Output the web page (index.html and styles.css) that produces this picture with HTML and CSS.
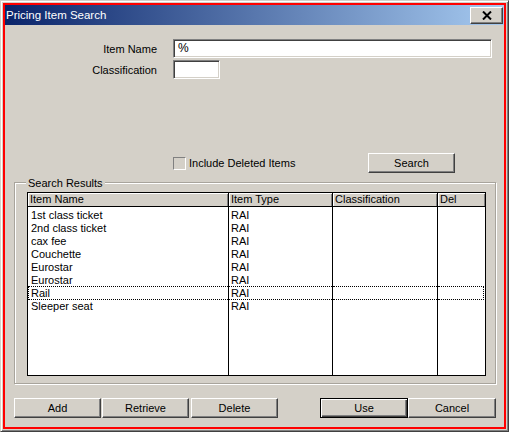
FILE: index.html
```html
<!DOCTYPE html>
<html>
<head>
<meta charset="utf-8">
<link rel="stylesheet" href="styles.css">
</head>
<body>
<div class="frame">
  <div class="win">
    <div class="titlebar">
      <span class="title">Pricing Item Search</span>
      <button class="close"><svg width="10" height="9" viewBox="0 0 10 9"><path d="M1 0.5 L9 8.5 M9 0.5 L1 8.5" stroke="#000" stroke-width="2" fill="none"/></svg></button>
    </div>
    <div class="content">
      <div class="form-row r1"><span class="lbl">Item Name</span><div class="input wide">%</div></div>
      <div class="form-row r2"><span class="lbl">Classification</span><div class="input narrow"></div></div>
      <div class="check-row">
        <div class="check-wrap"><span class="checkbox"></span><span>Include Deleted Items</span></div>
        <button class="btn">Search</button>
      </div>
      <div class="group">
        <span class="group-title">Search Results</span>
        <div class="list">
          <div class="col c1">
            <div class="hdr">Item Name</div>
            <div class="cells">
              <div class="cell">1st class ticket</div>
              <div class="cell">2nd class ticket</div>
              <div class="cell">cax fee</div>
              <div class="cell">Couchette</div>
              <div class="cell">Eurostar</div>
              <div class="cell">Eurostar</div>
              <div class="cell focus first">Rail</div>
              <div class="cell">Sleeper seat</div>
            </div>
          </div>
          <div class="col c2">
            <div class="hdr">Item Type</div>
            <div class="cells">
              <div class="cell">RAI</div>
              <div class="cell">RAI</div>
              <div class="cell">RAI</div>
              <div class="cell">RAI</div>
              <div class="cell">RAI</div>
              <div class="cell">RAI</div>
              <div class="cell focus">RAI</div>
              <div class="cell">RAI</div>
            </div>
          </div>
          <div class="col c3">
            <div class="hdr">Classification</div>
            <div class="cells">
              <div class="cell"></div>
              <div class="cell"></div>
              <div class="cell"></div>
              <div class="cell"></div>
              <div class="cell"></div>
              <div class="cell"></div>
              <div class="cell focus"></div>
              <div class="cell"></div>
            </div>
          </div>
          <div class="col c4">
            <div class="hdr">Del</div>
            <div class="cells">
              <div class="cell"></div>
              <div class="cell"></div>
              <div class="cell"></div>
              <div class="cell"></div>
              <div class="cell"></div>
              <div class="cell"></div>
              <div class="cell focus last"></div>
              <div class="cell"></div>
            </div>
          </div>
        </div>
      </div>
      <div class="btn-row">
        <button class="btn">Add</button>
        <button class="btn g1">Retrieve</button>
        <button class="btn g2">Delete</button>
        <button class="btn default g3">Use</button>
        <button class="btn wide-btn">Cancel</button>
      </div>
    </div>
  </div>
</div>
</body>
</html>
```
FILE: styles.css
```css
body {
  margin: 0;
  background: #d4d0c8;
  font-family: "Liberation Sans", Arial, sans-serif;
  font-size: 11px;
  color: #000;
}
.frame {
  width: 509px;
  height: 432px;
  box-sizing: border-box;
  border: 1px solid;
  border-color: #d4d0c8 #404040 #404040 #d4d0c8;
  box-shadow: inset 1px 1px 0 #fff, inset -1px -1px 0 #808080;
  padding: 2px;
  background: #d4d0c8;
}
.win {
  height: 100%;
  box-sizing: border-box;
  border: 2px solid #ff0000;
}
.titlebar {
  height: 20px;
  display: flex;
  align-items: center;
  justify-content: space-between;
  background: linear-gradient(to right, #0a246a, #a6caf0);
  padding-left: 1px;
}
.title {
  color: #fff;
  font-size: 11.5px;
}
.close {
  width: 33px;
  height: 17px;
  margin-right: 1px;
  padding: 0;
  display: flex;
  align-items: center;
  justify-content: center;
  box-sizing: border-box;
  background: #d4d0c8;
  border: 1px solid;
  border-color: #fff #404040 #404040 #fff;
  box-shadow: inset -1px -1px 0 #808080;
}
.form-row {
  display: flex;
  align-items: center;
  gap: 16px;
}
.r1 { margin-top: 14px; }
.r2 { margin-top: 2px; }
.lbl {
  width: 152px;
  text-align: right;
}
.input {
  height: 19px;
  box-sizing: border-box;
  background: #fff;
  border: 1px solid;
  border-color: #808080 #fff #fff #808080;
  box-shadow: inset 1px 1px 0 #404040, inset -1px -1px 0 #d4d0c8;
  padding-left: 4px;
  line-height: 17px;
  font-size: 12px;
}
.wide { width: 319px; }
.narrow { width: 47px; }
.check-row {
  margin-top: 74px;
  height: 20px;
  display: flex;
  align-items: center;
  padding-left: 168px;
}
.check-wrap {
  width: 195px;
  display: flex;
  align-items: center;
  gap: 3px;
}
.checkbox {
  width: 13px;
  height: 13px;
  box-sizing: border-box;
  border: 1px solid;
  border-color: #808080 #fff #fff #808080;
  background: #d4d0c8;
}
.btn {
  width: 87px;
  height: 20px;
  box-sizing: border-box;
  padding: 0;
  background: #d4d0c8;
  border: 1px solid;
  border-color: #fff #404040 #404040 #fff;
  box-shadow: inset -1px -1px 0 #808080;
  font-family: "Liberation Sans", Arial, sans-serif;
  font-size: 11px;
  color: #000;
}
.group {
  position: relative;
  margin: 9px 0 0 9px;
  width: 482px;
  height: 202px;
  box-sizing: border-box;
  border: 1px solid #a8a49c;
  box-shadow: inset 1px 1px 0 #fff, 1px 1px 0 #fff;
  padding: 9px 0 0 12px;
}
.group-title {
  position: absolute;
  left: 11px;
  top: -6px;
  padding: 0 2px;
  line-height: 13px;
  background: #d4d0c8;
}
.list {
  width: 459px;
  height: 184px;
  box-sizing: border-box;
  border: 1px solid #000;
  background: #fff;
  display: flex;
  font-size: 11px;
}
.col {
  box-sizing: border-box;
  border-right: 1px solid #000;
}
.c1 { width: 201px; }
.c2 { width: 104px; }
.c3 { width: 105px; }
.c4 { flex: 1; border-right: none; }
.hdr {
  height: 14px;
  box-sizing: border-box;
  border-bottom: 1px solid #000;
  background: #d4d0c8;
  box-shadow: inset 1px 1px 0 #fff, inset -1px 0 0 #808080;
  padding-left: 2px;
  line-height: 13px;
  white-space: nowrap;
}
.cells { padding-top: 2px; }
.cell {
  height: 13px;
  line-height: 13px;
  padding-left: 2px;
  white-space: nowrap;
  position: relative;
}
.c1 .cell { padding-left: 3px; }
.focus::before {
  content: "";
  position: absolute;
  left: 0;
  right: 0;
  top: -1px;
  bottom: 0;
  border-top: 1px dotted #000;
  border-bottom: 1px dotted #000;
}
.focus.first::before { border-left: 1px dotted #000; }
.focus.last::before { border-right: 1px dotted #000; right: 1px; }
.btn-row {
  margin: 14px 0 0 9px;
  display: flex;
}
.g1 { margin-left: 1px; }
.g2 { margin-left: 2px; }
.g3 { margin-left: 42px; }
.default {
  width: 88px;
  border: 1px solid #000;
  box-shadow: inset 1px 1px 0 #fff, inset -1px -1px 0 #404040, inset -2px -2px 0 #808080;
}
.wide-btn { width: 88px; }
```
